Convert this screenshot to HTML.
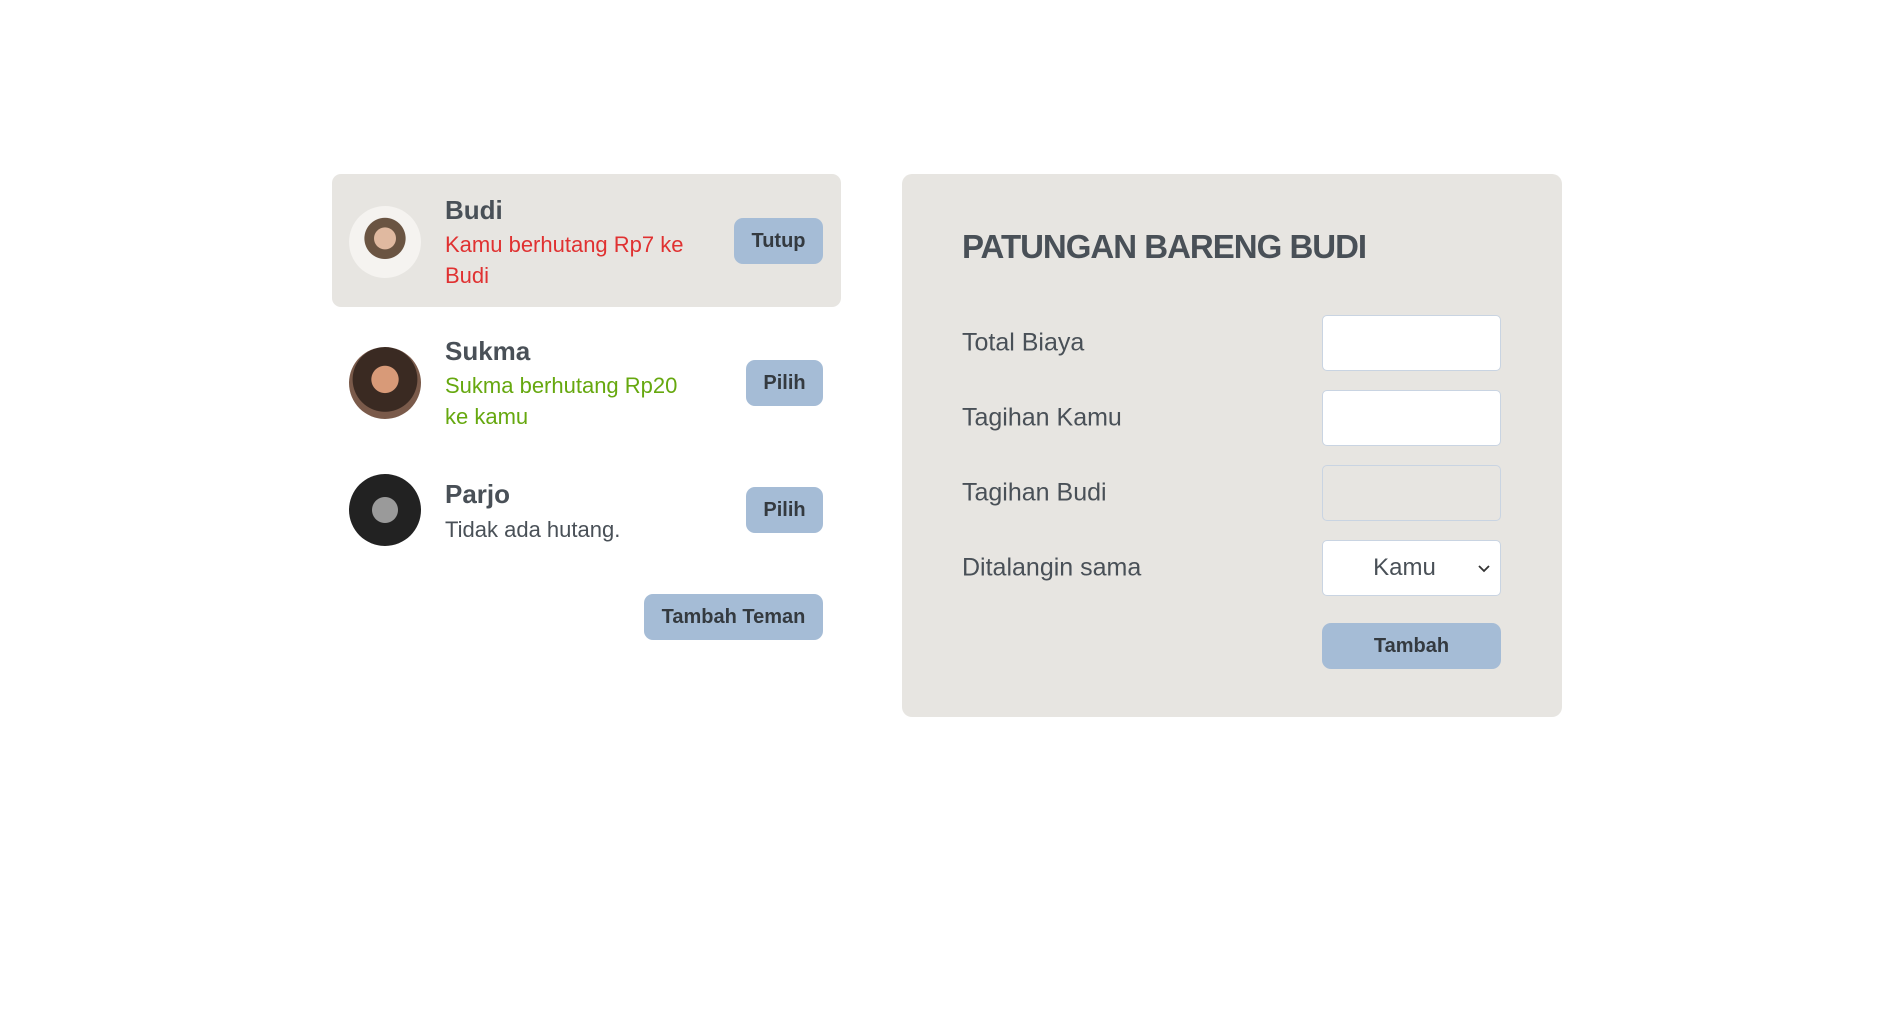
<!DOCTYPE html>
<html><head><style>
*{box-sizing:border-box;margin:0;padding:0}
body{width:1898px;height:1025px;background:#fff;font-family:"Liberation Sans",sans-serif;color:#495057;position:relative;overflow:hidden}
.abs{position:absolute}
.card{position:absolute;left:332px;width:509px;border-radius:9px}
.av{position:absolute;left:349px;width:72px;height:72px;border-radius:50%}
.name{position:absolute;left:445px;font-size:26px;font-weight:bold}
.desc{position:absolute;left:445px;font-size:22px;line-height:31px;width:262px}
.btn{position:absolute;background:#a5bcd6;border-radius:9px;font-weight:bold;font-size:20px;color:#343a40;display:flex;align-items:center;justify-content:center}
.panel{position:absolute;left:902px;top:174px;width:660px;height:543px;background:#e7e5e1;border-radius:10px}
.lab{position:absolute;left:962px;font-size:25px;transform:translateY(-50%)}
.inp{position:absolute;left:1322px;width:179px;height:56px;background:#fff;border:1px solid #c9d4e2;border-radius:5px}
</style></head><body>
<div class="card" style="top:174px;height:133px;background:#e7e5e1"></div>
<div class="av" style="top:206px;background:radial-gradient(circle at 50% 45%,#e0b9a0 0 20%,#6a5442 21% 38%,#f5f3f0 39%)"></div>
<div class="name" style="top:195px">Budi</div>
<div class="desc" style="top:229px;color:#e03131">Kamu berhutang Rp7 ke<br>Budi</div>
<div class="btn" style="left:734px;top:218px;width:89px;height:46px">Tutup</div>

<div class="av" style="top:347px;background:radial-gradient(circle at 50% 45%,#d89a78 0 25%,#3a2a22 26% 60%,#7a5a4a 61%)"></div>
<div class="name" style="top:336px">Sukma</div>
<div class="desc" style="top:370px;color:#66a80f">Sukma berhutang Rp20<br>ke kamu</div>
<div class="btn" style="left:746px;top:360px;width:77px;height:46px">Pilih</div>

<div class="av" style="top:474px;background:radial-gradient(circle at 50% 50%,#9a9a9a 0 25%,#222 26%)"></div>
<div class="name" style="top:479px">Parjo</div>
<div class="desc" style="top:514px">Tidak ada hutang.</div>
<div class="btn" style="left:746px;top:487px;width:77px;height:46px">Pilih</div>

<div class="btn" style="left:644px;top:594px;width:179px;height:46px">Tambah Teman</div>

<div class="panel"></div>
<div class="abs" style="left:962px;top:228px;font-size:33px;font-weight:bold;letter-spacing:-1px">PATUNGAN BARENG BUDI</div>
<div class="lab" style="top:343px">Total Biaya</div>
<div class="lab" style="top:418px">Tagihan Kamu</div>
<div class="lab" style="top:493px">Tagihan Budi</div>
<div class="lab" style="top:568px">Ditalangin sama</div>
<div class="inp" style="top:315px"></div>
<div class="inp" style="top:390px"></div>
<div class="inp" style="top:465px;background:#e7e5e1"></div>
<div class="inp" style="top:540px;display:flex;align-items:center;justify-content:center;font-size:24px;padding-right:14px">Kamu
<svg class="abs" style="right:10px;top:24px" width="12" height="8" viewBox="0 0 12 8"><path d="M1 1l5 5 5-5" stroke="#333" stroke-width="1.8" fill="none"/></svg></div>
<div class="btn" style="left:1322px;top:623px;width:179px;height:46px">Tambah</div>
</body></html>
